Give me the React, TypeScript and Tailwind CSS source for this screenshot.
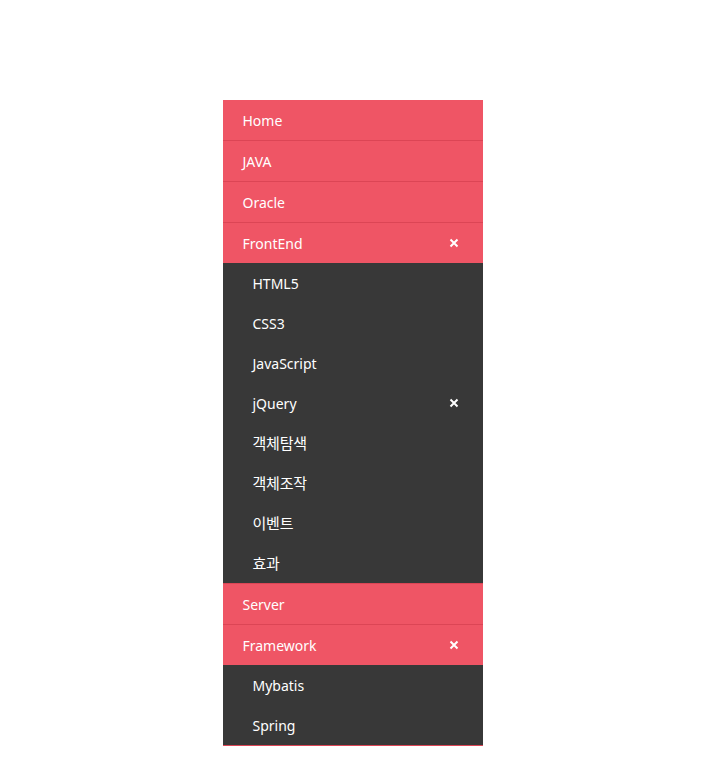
import React from 'react';

interface MenuItem {
  label: string;
  children?: string[];
}

const menu: MenuItem[] = [
  { label: 'Home' },
  { label: 'JAVA' },
  { label: 'Oracle' },
  { label: 'FrontEnd', children: ['HTML5', 'CSS3', 'JavaScript', 'jQuery', '객체탐색', '객체조작', '이벤트', '효과'] },
  { label: 'Server' },
  { label: 'Framework', children: ['Mybatis', 'Spring'] },
];

// Korean labels need the CJK face at a slightly larger size to match the original widths
const isHangul = (s: string) => /[\uac00-\ud7a3]/.test(s);

const CloseMark = () => (
  <svg width="10" height="10" viewBox="0 0 10 10" className="shrink-0">
    <path d="M1.5 1.5 L8.5 8.5 M8.5 1.5 L1.5 8.5" stroke="white" strokeWidth="2" />
  </svg>
);

const App: React.FC = () => {
  return (
    <div className="min-h-screen bg-white pt-[100px] font-['Noto_Sans','Noto_Sans_CJK_KR',sans-serif]">
      <ul className="mx-auto w-[260px] text-[14px] text-white">
        {menu.map((item) => (
          <li key={item.label} className="border-b border-[#dc4555] bg-[#ef5565]">
            <div className="flex h-10 items-center justify-between pl-[20px] pr-[24px]">
              <span>{item.label}</span>
              {item.children && <CloseMark />}
            </div>
            {item.children && (
              <ul className="bg-[#383838]">
                {item.children.map((child) => (
                  <li key={child} className="flex h-10 items-center justify-between pl-[30px] pr-[24px]">
                    <span
                      className={
                        isHangul(child)
                          ? "font-['Noto_Sans_CJK_KR',sans-serif] text-[15px] tracking-[-0.2px]"
                          : ''
                      }
                    >
                      {child}
                    </span>
                    {child === 'jQuery' && <CloseMark />}
                  </li>
                ))}
              </ul>
            )}
          </li>
        ))}
      </ul>
    </div>
  );
};

export default App;
